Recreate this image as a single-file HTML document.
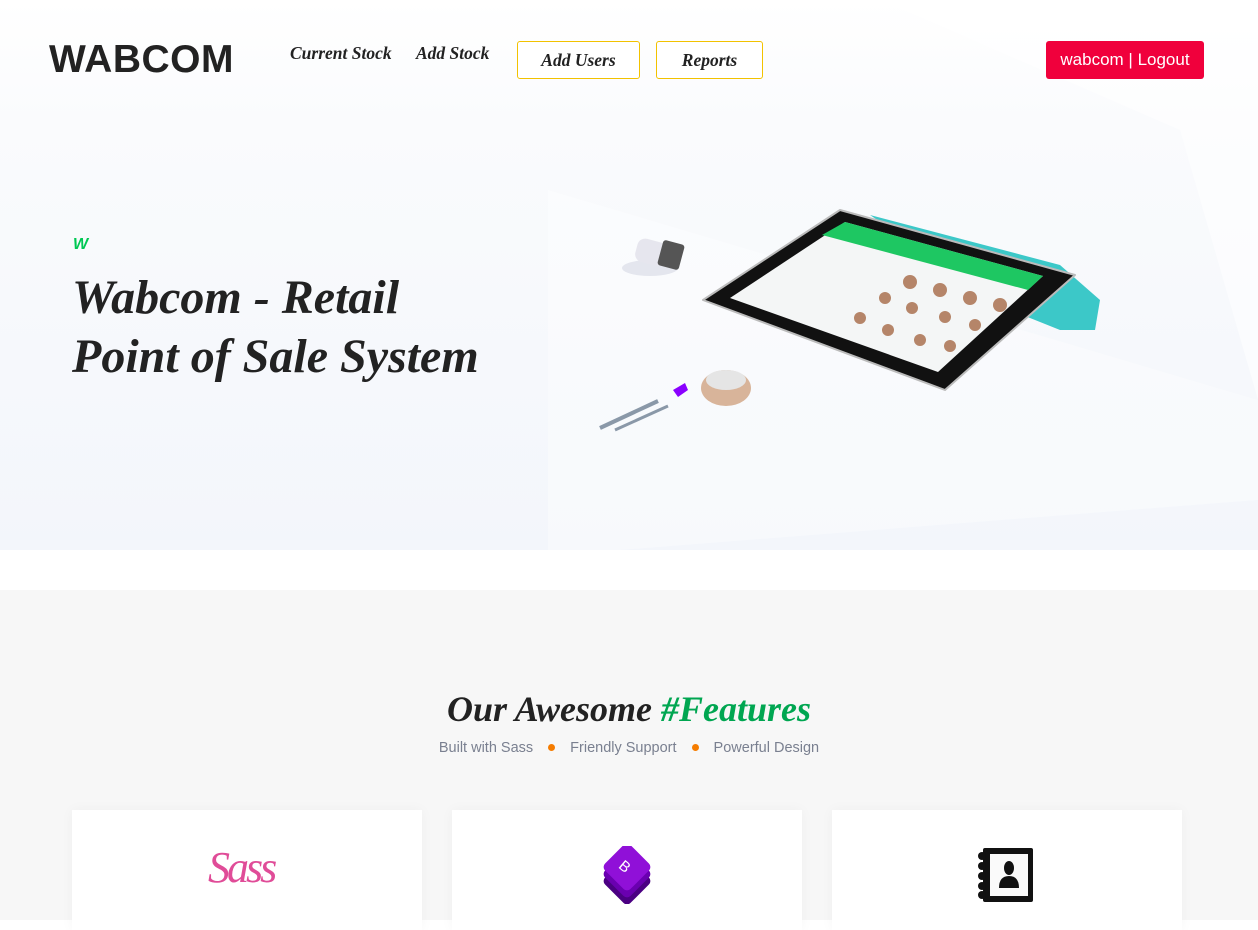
<!DOCTYPE html>
<html><head><meta charset="utf-8"><style>
*{margin:0;padding:0;box-sizing:border-box}
body{width:1258px;height:920px;overflow:hidden;background:#fff;font-family:"Liberation Sans",sans-serif;position:relative}
.hero{position:absolute;left:0;top:0;width:1258px;height:550px;background:linear-gradient(180deg,#fff 0,#fafbfd 120px,#f3f6fb 550px);overflow:hidden}
.logo{position:absolute;left:49px;top:38px;font-size:39px;font-weight:bold;color:#222;letter-spacing:0.5px}
.nav{position:absolute;top:43px;font-family:"Liberation Serif",serif;font-style:italic;font-weight:bold;font-size:17.5px;color:#222}
.btn{position:absolute;top:41px;height:38px;border:1px solid #f2c200;border-radius:3px;font-family:"Liberation Serif",serif;font-style:italic;font-weight:bold;font-size:17.5px;color:#222;text-align:center;line-height:36px;background:#fff}
.logout{position:absolute;left:1046px;top:41px;width:158px;height:38px;background:#f0003c;color:#fff;border-radius:3px;font-size:17px;text-align:center;line-height:38px}
.w{position:absolute;left:73px;top:236px;color:#00c853;font-style:italic;font-weight:bold;font-size:16px}
h1{position:absolute;left:72px;top:268px;font-family:"Liberation Serif",serif;font-style:italic;font-weight:bold;font-size:48px;line-height:59px;color:#222}
.feat{position:absolute;left:0;top:590px;width:1258px;height:330px;background:#f7f7f7}
h2{position:absolute;left:0;width:1258px;top:688px;text-align:center;font-family:"Liberation Serif",serif;font-style:italic;font-weight:bold;font-size:36px;color:#222}
h2 span{color:#00a651}
.sub{position:absolute;left:0;width:1258px;top:740px;text-align:center;font-size:14.5px;color:#7a8090}
.sub i{display:inline-block;width:7px;height:7px;border-radius:50%;background:#f57c00;margin:0 15px 1px}
.card{position:absolute;top:810px;width:350px;height:120px;background:#fff;box-shadow:0 0 12px rgba(0,0,0,0.04)}
</style></head><body>
<div class="hero">
<svg width="1258" height="550" style="position:absolute;left:0;top:0">
<polygon points="880,0 1258,0 1258,400 1180,130" fill="#fff" opacity="0.5"/>
<polygon points="548,190 1258,400 1258,500 620,550 548,550" fill="#fff" opacity="0.35"/>
</svg>
<svg width="600" height="280" style="position:absolute;left:540px;top:180px" viewBox="0 0 600 280">
<ellipse cx="110" cy="88" rx="28" ry="8" fill="#e4e6ee"/>
<rect x="96" y="60" width="30" height="24" rx="8" fill="#e6e6ee" transform="rotate(15 110 72)"/>
<rect x="120" y="62" width="22" height="26" rx="3" fill="#555" transform="rotate(15 131 75)"/>
<polygon points="330,35 520,85 560,120 555,150 520,150 470,130" fill="#3cc8c8"/>
<polygon points="300,30 535,95 405,210 163,120" fill="#111" stroke="#bbb" stroke-width="2" stroke-linejoin="round"/>
<polygon points="305,42 503,96 398,192 190,118" fill="#f4f6f6"/>
<polygon points="305,42 503,96 488,110 282,55" fill="#1ec762"/>
<g fill="#a0603a" opacity="0.75"><circle cx="370" cy="102" r="7"/><circle cx="400" cy="110" r="7"/><circle cx="430" cy="118" r="7"/><circle cx="460" cy="125" r="7"/><circle cx="345" cy="118" r="6"/><circle cx="372" cy="128" r="6"/><circle cx="405" cy="137" r="6"/><circle cx="435" cy="145" r="6"/><circle cx="320" cy="138" r="6"/><circle cx="348" cy="150" r="6"/><circle cx="380" cy="160" r="6"/><circle cx="410" cy="166" r="6"/></g>
<ellipse cx="186" cy="208" rx="25" ry="18" fill="#d8b49a"/>
<ellipse cx="186" cy="200" rx="20" ry="10" fill="#e5e5e5"/>
<line x1="60" y1="248" x2="118" y2="221" stroke="#8a98a8" stroke-width="4"/>
<line x1="75" y1="250" x2="128" y2="226" stroke="#8a98a8" stroke-width="3"/>
<polygon points="133,210 145,203 148,210 138,217" fill="#8a00ff"/>
</svg>
<div class="logo">WABCOM</div>
<div class="nav" style="left:290px">Current Stock</div>
<div class="nav" style="left:416px">Add Stock</div>
<div class="btn" style="left:517px;width:123px">Add Users</div>
<div class="btn" style="left:656px;width:107px">Reports</div>
<div class="logout">wabcom | Logout</div>
<div class="w">W</div>
<h1>Wabcom - Retail<br>Point of Sale System</h1>
</div>
<div class="feat"></div>
<h2>Our Awesome <span>#Features</span></h2>
<div class="sub">Built with Sass<i></i>Friendly Support<i></i>Powerful Design</div>
<div class="card" style="left:72px"><div style="position:absolute;left:136px;top:32px;font-family:'Liberation Serif',serif;font-style:italic;font-size:44px;color:#e04c98;letter-spacing:-3px">Sass</div></div>
<div class="card" style="left:452px"><svg style="position:absolute;left:144px;top:36px" width="62" height="58" viewBox="0 0 62 58"><rect x="13" y="17" width="36" height="36" rx="5" transform="rotate(45 31 35)" fill="#4b0082"/><rect x="13" y="10" width="36" height="36" rx="5" transform="rotate(45 31 28)" fill="#6a00b0"/><rect x="13" y="3" width="36" height="36" rx="5" transform="rotate(45 31 21)" fill="#9010d8"/><text x="24" y="27" fill="#fff" font-size="15" font-family="Liberation Sans" transform="rotate(40 31 21)">B</text></svg></div>
<div class="card" style="left:832px"><svg style="position:absolute;left:145px;top:36px" width="58" height="58" viewBox="0 0 58 58"><rect x="6" y="2" width="50" height="54" rx="2" fill="#111"/><rect x="13" y="8" width="38" height="42" fill="#fafafa"/><g fill="#111"><circle cx="5" cy="10" r="4"/><circle cx="5" cy="20" r="4"/><circle cx="5" cy="30" r="4"/><circle cx="5" cy="40" r="4"/><circle cx="5" cy="49" r="4"/><ellipse cx="32" cy="22" rx="5" ry="7"/><path d="M22 42 Q22 30 32 30 Q42 30 42 42 Z"/></g></svg></div>
</body></html>
